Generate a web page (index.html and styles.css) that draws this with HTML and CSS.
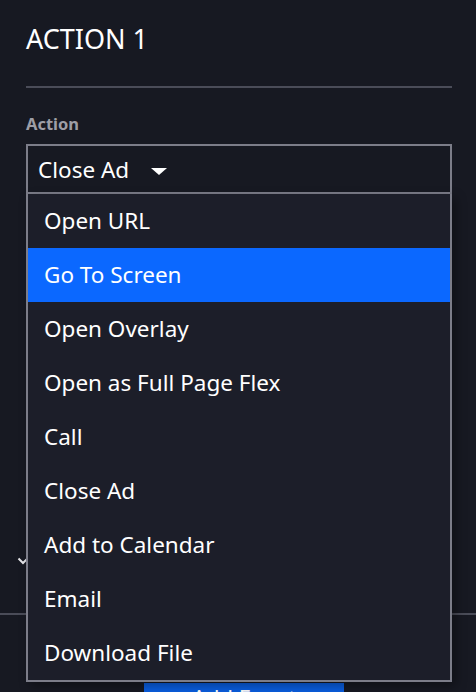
FILE: index.html
```html
<!DOCTYPE html>
<html lang="en">
<head>
    <meta charset="UTF-8">
    <meta name="viewport" content="width=device-width, initial-scale=1.0">
    <title>Action 1</title>
    <link rel="stylesheet" href="styles.css">
</head>
<body>

    <div class="panel">
        <h2 class="panel-title">ACTION 1</h2>
        <div class="divider"></div>

        <!-- Action field with its open dropdown -->
        <div class="field">
            <label class="field-label">Action</label>
            <div class="select">
                <span class="select-value">Close Ad</span>
                <span class="caret"></span>
            </div>

            <ul class="options">
                <li>Open URL</li>
                <li class="selected">Go To Screen</li>
                <li>Open Overlay</li>
                <li>Open as Full Page Flex</li>
                <li>Call</li>
                <li>Close Ad</li>
                <li>Add to Calendar</li>
                <li>Email</li>
                <li>Download File</li>
            </ul>
        </div>

        <!-- Content hidden behind the dropdown -->
        <div class="behind">
            <div class="collapse-row">
                <svg class="chevron" width="12" height="8" viewBox="0 0 12 8">
                    <path d="M1.5 1.5 L6 6 L10.5 1.5" fill="none" stroke="#e6e6ea" stroke-width="2"/>
                </svg>
            </div>
        </div>
    </div>

    <div class="footer">
        <button class="add-event">Add Event</button>
    </div>

</body>
</html>
```

FILE: styles.css
```css
body {
    margin: 0;
    background-color: #171922;
    color: #fff;
    font-family: "Noto Sans", "Open Sans", sans-serif;
    height: 692px;
    overflow: hidden;
}

.panel {
    padding: 0 24px 0 26px;
}

.panel-title {
    margin: 0;
    padding-top: 22px;
    font-size: 27px;
    font-weight: 400;
    line-height: 34px;
}

.divider {
    height: 2px;
    background-color: #4a4c58;
    margin-top: 30px;
}

.field {
    position: relative;
    margin-top: 26px;
}

.field-label {
    display: block;
    font-size: 16.5px;
    font-weight: 700;
    color: #9d9ea6;
    line-height: 20px;
}

.select {
    margin-top: 10px;
    height: 46px;
    border: 2px solid #7c7d89;
    display: flex;
    align-items: center;
    padding-left: 10px;
    font-size: 22.5px;
}

.caret {
    width: 0;
    height: 0;
    margin-left: 22px;
    margin-top: 4px;
    border-left: 8px solid transparent;
    border-right: 8px solid transparent;
    border-top: 7px solid #fff;
}

.options {
    position: absolute;
    top: 80px;
    left: 0;
    right: 0;
    margin: 0;
    padding: 0;
    list-style: none;
    background-color: #1c1e29;
    border: 2px solid #7c7d89;
    border-top: none;
    box-shadow: 4px 4px 10px rgba(0, 0, 0, 0.35);
    z-index: 2;
}

.options li {
    height: 54px;
    line-height: 54px;
    padding-left: 16px;
    font-size: 22.5px;
}

.options li.selected {
    background-color: #0b68ff;
}

.behind {
    height: 387px;
}

.collapse-row {
    padding-top: 363px;
    margin-left: -9px;
    line-height: 0;
}

.footer {
    border-top: 2px solid #4a4c58;
    margin-top: 32px;
    padding-top: 68px;
    text-align: center;
}

.add-event {
    width: 200px;
    height: 40px;
    margin-left: 12px;
    border: none;
    background-color: #0a5ee0;
    color: #fff;
    font-family: inherit;
    font-size: 22px;
    padding: 0 0 12px;
    line-height: 20px;
}
```
